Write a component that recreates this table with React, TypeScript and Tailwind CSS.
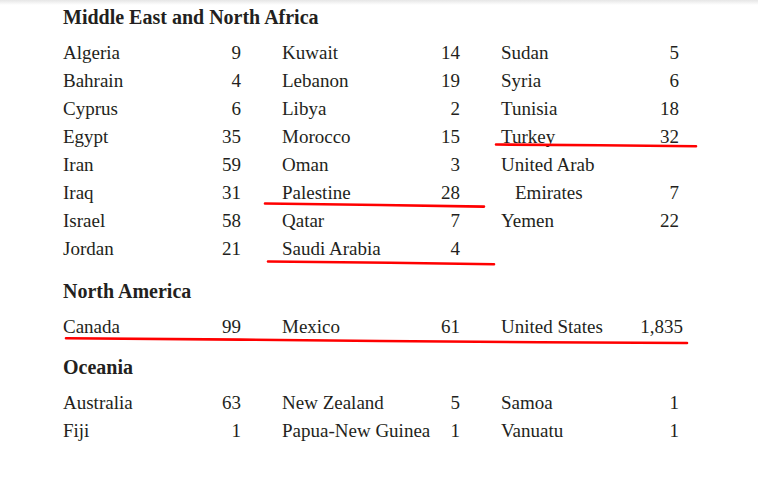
type Entry = { name: string; count?: string; indent?: boolean; pull?: boolean };

const regions: { title: string; columns: Entry[][] }[] = [
  {
    title: 'Middle East and North Africa',
    columns: [
      [
        { name: 'Algeria', count: '9' },
        { name: 'Bahrain', count: '4' },
        { name: 'Cyprus', count: '6' },
        { name: 'Egypt', count: '35' },
        { name: 'Iran', count: '59' },
        { name: 'Iraq', count: '31' },
        { name: 'Israel', count: '58' },
        { name: 'Jordan', count: '21' },
      ],
      [
        { name: 'Kuwait', count: '14' },
        { name: 'Lebanon', count: '19' },
        { name: 'Libya', count: '2' },
        { name: 'Morocco', count: '15' },
        { name: 'Oman', count: '3' },
        { name: 'Palestine', count: '28' },
        { name: 'Qatar', count: '7' },
        { name: 'Saudi Arabia', count: '4' },
      ],
      [
        { name: 'Sudan', count: '5' },
        { name: 'Syria', count: '6' },
        { name: 'Tunisia', count: '18' },
        { name: 'Turkey', count: '32' },
        { name: 'United Arab' },
        { name: 'Emirates', count: '7', indent: true },
        { name: 'Yemen', count: '22' },
      ],
    ],
  },
  {
    title: 'North America',
    columns: [
      [{ name: 'Canada', count: '99' }],
      [{ name: 'Mexico', count: '61' }],
      [{ name: 'United States', count: '1,835', pull: true }],
    ],
  },
  {
    title: 'Oceania',
    columns: [
      [
        { name: 'Australia', count: '63' },
        { name: 'Fiji', count: '1' },
      ],
      [
        { name: 'New Zealand', count: '5' },
        { name: 'Papua-New Guinea', count: '1' },
      ],
      [
        { name: 'Samoa', count: '1' },
        { name: 'Vanuatu', count: '1' },
      ],
    ],
  },
];

function Row({ entry }: { entry: Entry }) {
  return (
    <div className="flex justify-between h-[28px] leading-[28px] whitespace-nowrap">
      <span className={entry.indent ? 'pl-[14px]' : ''}>{entry.name}</span>
      {entry.count && <span className={entry.pull ? 'mr-[-4px]' : ''}>{entry.count}</span>}
    </div>
  );
}

export default function App() {
  return (
    <div className="relative w-[758px] h-[477px] bg-white text-[#231f20] overflow-hidden font-['Liberation_Serif','Times_New_Roman',serif]">
      <div className="h-[5px] bg-gradient-to-b from-[#e6e6e6] to-white" />
      <div className="pl-[63px]">
        {regions.map((region, i) => (
          <section key={region.title} className={i === 1 ? 'mt-[16px]' : i === 2 ? 'mt-[14px]' : ''}>
            <h2 className="text-[20px] font-bold leading-[24px] mb-[10px]">{region.title}</h2>
            <div className="grid grid-cols-[178px_178px_178px] gap-x-[41px] text-[19px]">
              {region.columns.map((col, j) => (
                <div key={j}>
                  {col.map((entry) => (
                    <Row key={entry.name} entry={entry} />
                  ))}
                </div>
              ))}
            </div>
          </section>
        ))}
      </div>

      {/* red pen marks */}
      <svg className="absolute inset-0 pointer-events-none" width="758" height="477" viewBox="0 0 758 477">
        <g fill="none" stroke="#ff0000" strokeWidth="2.6" strokeLinecap="round" strokeLinejoin="round">
          <path d="M496 144.5 L600 145.2 L696 146.2" />
          <path d="M265 203.5 L380 205 L484 206.6" />
          <path d="M268 261.5 L390 262.8 L494 264.2" />
          <path d="M66 338.2 L240 339.6 L380 341 L540 342.2 L687 343" />
        </g>
      </svg>
    </div>
  );
}
